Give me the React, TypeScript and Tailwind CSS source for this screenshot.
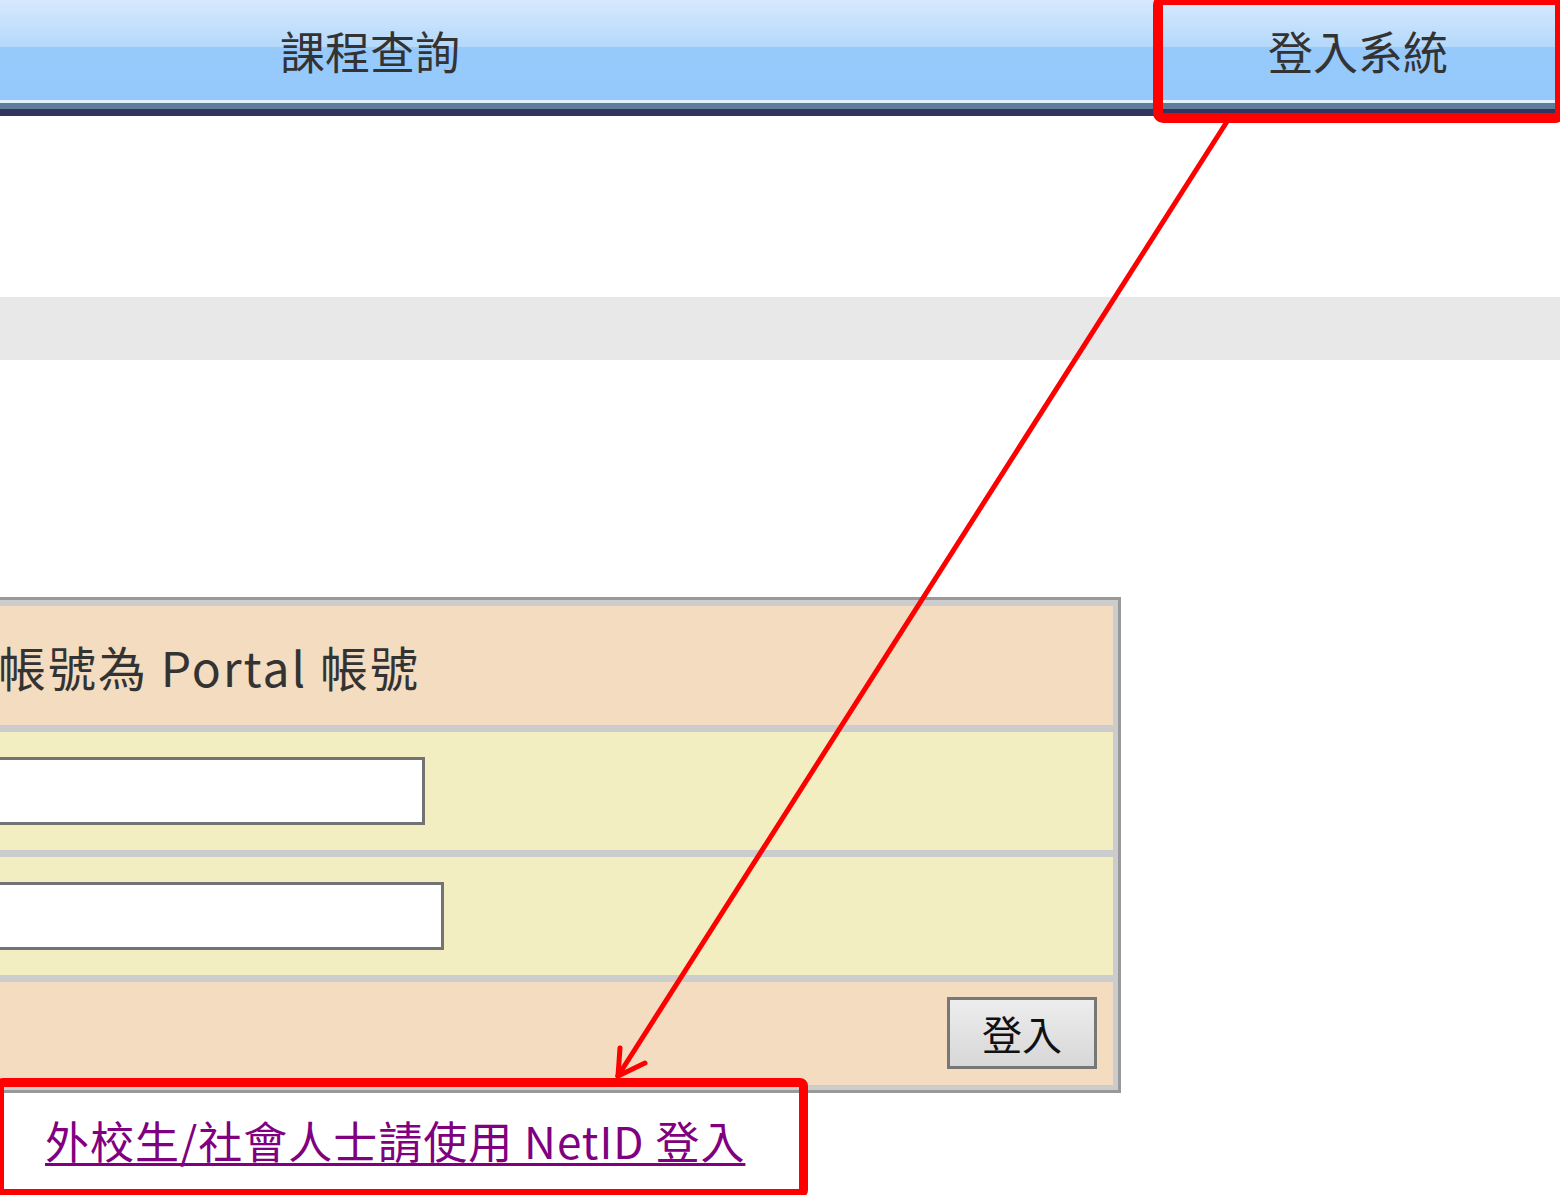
import React from "react";

const font = { fontFamily: '"Noto Sans CJK TC", "Noto Sans", sans-serif' };

export default function App() {
  return (
    <div
      className="relative w-[1560px] h-[1195px] overflow-hidden bg-white"
      style={font}
    >
      {/* Nav bar */}
      <div className="flex flex-col">
        <div className="flex h-[100px] items-center bg-[linear-gradient(to_bottom,#d6e9fd_0px,#b4d9fb_47px,#97c9fb_47px,#96c9fb_100px)] text-[45px] leading-none text-[#333]">
          <div className="w-[740px] text-center">課程查詢</div>
          <div className="flex-1" />
          <div className="w-[396px] text-center">登入系統</div>
          <div className="w-[4px]" />
        </div>
        <div className="h-[3px] bg-[#e2f0fd]" />
        <div className="h-[6px] bg-[#5d7d98]" />
        <div className="h-[7px] bg-[#33335f]" />
      </div>

      <div className="h-[181px]" />
      <div className="h-[63px] bg-[#e8e8e8]" />
      <div className="h-[237px]" />

      {/* Login table */}
      <div className="ml-[-60px] w-[1181px] border-[3px] border-[#999] bg-[#ccc] pt-[6px] pl-[6px] pr-[5px] pb-[5px] flex flex-col gap-[7px]">
        <div className="h-[119px] bg-[#f4dcc0] flex items-center pl-[49px] text-[48px] leading-none tracking-[2px] text-[#333] whitespace-nowrap">
          帳號為 Portal 帳號
        </div>
        <div className="h-[118px] bg-[#f2eec2] pt-[25px] pl-[20px]">
          <div className="w-[456px] h-[68px] border-[3px] border-[#737373] bg-white" />
        </div>
        <div className="h-[118px] bg-[#f2eec2] pt-[25px] pl-[20px]">
          <div className="w-[475px] h-[68px] border-[3px] border-[#737373] bg-white" />
        </div>
        <div className="h-[103px] bg-[#f4dcc0] flex justify-end items-start pt-[15px] pr-[16px]">
          <button className="w-[150px] h-[72px] border-[3px] border-[#777] bg-[linear-gradient(to_bottom,#ededed,#d7d7d7)] text-[40px] leading-none text-[#111] flex items-center justify-center">
            登入
          </button>
        </div>
      </div>

      {/* NetID link */}
      <div className="pt-[21px] pl-[45px]">
        <a
          href="#"
          className="text-[44px] leading-[1.2] text-[#800080] underline decoration-[3px] underline-offset-[4px] tracking-[1px] whitespace-nowrap"
        >
          外校生/社會人士請使用 NetID 登入
        </a>
      </div>

      {/* Annotation: red boxes */}
      <div className="absolute left-[1153px] top-[-5px] w-[412px] h-[128px] border-[10px] border-[#ff0000] rounded-[10px]" />
      <div className="absolute left-[-5px] top-[1078px] w-[813px] h-[120px] border-[9px] border-[#ff0000] rounded-[8px]" />

      {/* Annotation: arrow */}
      <svg
        className="absolute left-0 top-0 pointer-events-none"
        width="1560"
        height="1195"
        viewBox="0 0 1560 1195"
      >
        <g stroke="#ff0000" strokeWidth="5" strokeLinecap="round" fill="none">
          <line x1="1228" y1="120" x2="618" y2="1076" />
          <line x1="618" y1="1076" x2="620" y2="1048" />
          <line x1="618" y1="1076" x2="645" y2="1063" />
        </g>
      </svg>
    </div>
  );
}
